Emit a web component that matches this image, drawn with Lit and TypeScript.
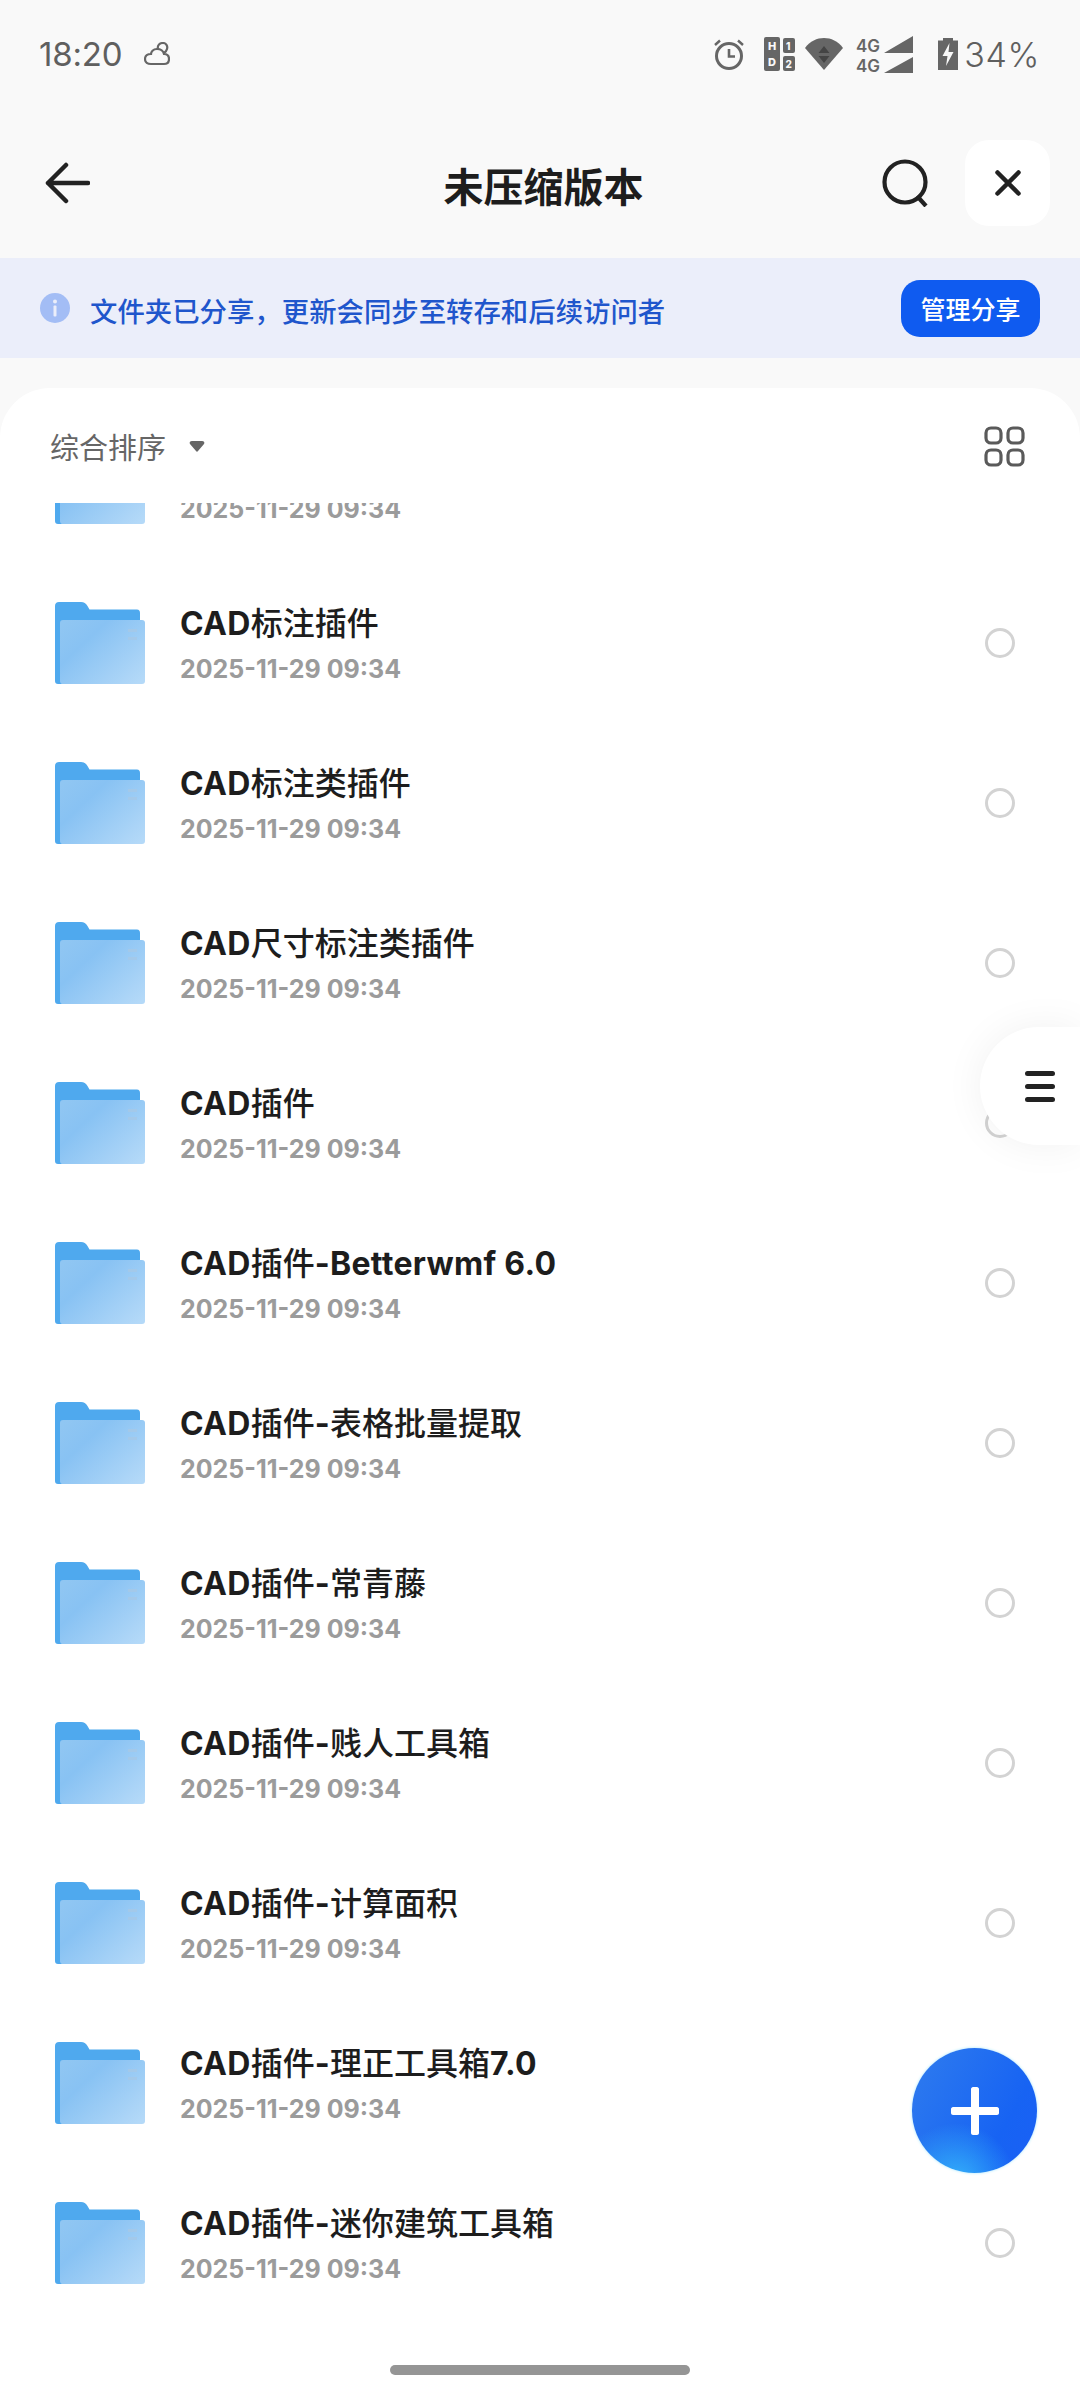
import { LitElement, html, css, svg } from "lit";
import { customElement } from "lit/decorators.js";

const NAMES = [
  "CAD标注插件",
  "CAD标注类插件",
  "CAD尺寸标注类插件",
  "CAD插件",
  "CAD插件-Betterwmf 6.0",
  "CAD插件-表格批量提取",
  "CAD插件-常青藤",
  "CAD插件-贱人工具箱",
  "CAD插件-计算面积",
  "CAD插件-理正工具箱7.0",
  "CAD插件-迷你建筑工具箱",
];

const folder = svg`<svg class="folder" width="90" height="82" viewBox="0 0 90 82">
  <defs>
    <linearGradient id="fg" x1="0" y1="0.1" x2="1" y2="0.9">
      <stop offset="0" stop-color="#90c6f2"/><stop offset="0.3" stop-color="#88c2f3"/><stop offset="1" stop-color="#b4d9f8"/>
    </linearGradient>
  </defs>
  <path d="M4 0H26C29 0 31 1.500 32.500 4L34.500 7.500H82C84 7.500 85 9 85 11V60L6 82H3C1 82 0 81 0 79V4C0 1.500 1.500 0 4 0Z" fill="#4fa9ee"/>
  <path d="M8 18H87C89 18 90 19 90 21V79C90 81 89 82 87 82H8C6 82 5 81 5 79V21C5 19 6 18 8 18Z" fill="url(#fg)"/>
  <rect x="73" y="27" width="9" height="3" fill="#a3c9ea"/><rect x="73" y="35" width="9" height="3" fill="#a3c9ea"/>
</svg>`;

/* Latin runs are heavier than the CJK glyphs in the reference's row titles. */
const nameParts = (n: string) =>
  n.split(/([A-Za-z0-9 .\-]+)/).map((p) => (/^[A-Za-z0-9 .\-]+$/.test(p) ? html`<b>${p}</b>` : p));

@customElement("app-root")
export class AppRoot extends LitElement {
  static styles = css`
    :host {
      display: flex;
      flex-direction: column;
      width: 1080px;
      height: 2400px;
      overflow: hidden;
      position: relative;
      background: #f9f9f9;
      font-family: Inter, "Noto Sans CJK SC", sans-serif;
      color: #1d1d1d;
    }
    * { box-sizing: border-box; }
    .status {
      height: 108px;
      flex: none;
      display: flex;
      align-items: center;
      padding: 0 40px 0 39px;
      color: #666;
    }
    .time { font-size: 33px; font-weight: 400; letter-spacing: -0.2px; color: #5f5f5f; }
    .cloud { margin-left: 22px; }
    .sr { margin-left: auto; display: flex; align-items: center; }
    .pct { font-size: 34px; font-weight: 300; margin-left: 6px; letter-spacing: 0.6px; color: #5f5f5f; }
    .sim { margin-left: 19px; }
    .wifi { margin-left: 10px; }
    .net { margin-left: 13px; }
    .bat { margin-left: 25px; }
    .header {
      height: 150px;
      flex: none;
      position: relative;
      display: flex;
      align-items: center;
      padding: 0 30px 0 45px;
    }
    .title {
      position: absolute;
      left: 7px;
      right: 0;
      top: 56px;
      text-align: center;
      font-size: 40px;
      font-weight: 700;
      line-height: 48px;
    }
    .search { margin-left: auto; }
    .close {
      margin-left: 36px;
      width: 85px;
      height: 86px;
      background: #fff;
      border-radius: 24px;
      display: flex;
      align-items: center;
      justify-content: center;
    }
    .banner {
      height: 100px;
      flex: none;
      background: #ebeefa;
      display: flex;
      align-items: center;
      padding: 0 40px 0 40px;
      color: #1f56cc;
      font-size: 27.4px;
      font-weight: 500;
    }
    .banner .txt { margin-left: 20px; position: relative; top: 2px; }
    .btn {
      margin-left: auto;
      width: 139px;
      height: 57px;
      border-radius: 19px;
      background: #0f5bf0;
      color: #fff;
      font-size: 25px;
      display: flex;
      align-items: center;
      justify-content: center;
    }
    .sheet {
      margin-top: 30px;
      flex: 1;
      min-height: 0;
      background: #fff;
      border-radius: 50px 50px 0 0;
      display: flex;
      flex-direction: column;
    }
    .bar {
      height: 115px;
      flex: none;
      display: flex;
      align-items: center;
      padding: 2px 55px 0 50px;
      color: #666;
      font-size: 29px;
    }
    .bar span { margin-bottom: 2px; }
    .caret { margin-left: 23px; }
    .grid { margin-left: auto; }
    .list { flex: 1; min-height: 0; overflow: hidden; }
    .rows { margin-top: -100px; }
    .row {
      height: 160px;
      display: flex;
      align-items: center;
      padding: 0 65px 0 55px;
    }
    .folder { flex: none; }
    .info { margin-left: 35px; flex: 1; padding-top: 3px; }
    .name { font-size: 32px; font-weight: 500; line-height: 42px; height: 42px; }
    .name b { font-weight: 700; letter-spacing: 0.3px; }
    .date {
      margin-top: 7px;
      font-size: 25px;
      line-height: 34px;
      font-weight: 700;
      color: #9b9b9b;
    }
    .radio {
      width: 30px;
      height: 30px;
      border: 3px solid #d3d3d3;
      border-radius: 50%;
    }
    .pill {
      position: absolute;
      right: 0;
      top: 1027px;
      width: 100px;
      height: 118px;
      border-radius: 59px 0 0 59px;
      background: #fff;
      box-shadow: 0 0 40px rgba(0, 0, 0, 0.06);
      display: flex;
      flex-direction: column;
      gap: 8px;
      justify-content: center;
      padding-left: 45px;
    }
    .pill i { display: block; width: 30px; height: 5px; border-radius: 3px; background: #222; }
    .fab {
      position: absolute;
      left: 912px;
      top: 2048px;
      width: 125px;
      height: 125px;
      border-radius: 50%;
      background:
        radial-gradient(circle at 35% 108%, #35b4fa 0%, rgba(53, 180, 250, 0) 38%),
        linear-gradient(120deg, #2f7cee 0%, #1763f3 70%, #1a60f5 100%);
      box-shadow: 0 0 3px #9fe6ff;
      display: flex;
      align-items: center;
      justify-content: center;
    }
    .home {
      position: absolute;
      left: 390px;
      top: 2365px;
      width: 300px;
      height: 10px;
      border-radius: 5px;
      background: #959595;
    }
  `;

  render() {
    return html`
      <div class="status">
        <span class="time">18:20</span>
        <svg class="cloud" width="26" height="24" viewBox="0 0 26 24" fill="none" stroke="#666" stroke-width="2.200">
          <path d="M7 22H20C23 22 25 20 25 17C25 14 23 12 20 12C19 8 16 7 13 7C9 7 7 10 7 12C3 12 1 14 1 17C1 20 3 22 7 22Z"/>
          <path d="M14 7C13 3 16 1 19 1C22 1 24 4 23 7C22.500 9 21.500 10 20 11"/>
        </svg>
        <div class="sr">
          <svg width="32" height="32" viewBox="0 0 32 32" fill="none" stroke="#666" stroke-width="3">
            <circle cx="16" cy="18" r="12.500"/>
            <path d="M16 11V18.500H22" stroke-width="2.600"/>
            <path d="M2 7L7 2.500M30 7L25 2.500" stroke-width="2.400"/>
          </svg>
          <svg class="sim" width="31" height="34" viewBox="0 0 31 34" font-family="Inter" font-weight="800" font-size="11">
            <rect x="0" y="0" width="16" height="34" rx="2" fill="#666"/>
            <rect x="19" y="1" width="12" height="15" rx="2" fill="#666"/>
            <rect x="19" y="19" width="12" height="15" rx="2" fill="#666"/>
            <text x="4" y="13" fill="#f9f9f9">H</text><text x="4" y="29" fill="#f9f9f9">D</text>
            <text x="22" y="12.500" fill="#f9f9f9" font-size="10">1</text><text x="21.500" y="30.500" fill="#f9f9f9" font-size="10">2</text>
          </svg>
          <svg class="wifi" width="38" height="32" viewBox="0 0 38 32">
            <path d="M0 10C5 3 12 0 19 0C26 0 33 3 38 10L19 32Z" fill="#666"/>
            <path d="M19 8L24.500 15H13.500Z M13.500 18H24.500L19 25Z" fill="#444"/>
          </svg>
          <svg class="net" width="57" height="37" viewBox="0 0 57 37" font-family="Inter" font-weight="600" font-size="17" fill="#666">
            <text x="0" y="16">4G</text><text x="0" y="36">4G</text>
            <path d="M28 17L57 0V17Z M28 37L57 21V37Z"/>
          </svg>
          <svg class="bat" width="20" height="32" viewBox="0 0 20 32">
            <path d="M5 0H15V2.500H20V32H0V2.500H5Z" fill="#666"/>
            <path d="M11.500 5L4.500 18H9.500L8 28L15.500 14H10.500Z" fill="#f9f9f9"/>
          </svg>
          <span class="pct">34%</span>
        </div>
      </div>

      <div class="header">
        <svg width="45" height="42" viewBox="0 0 45 42" fill="none" stroke="#222" stroke-width="4.500" stroke-linecap="round" stroke-linejoin="round">
          <path d="M43 21H3M21 3L3 21L21 39"/>
        </svg>
        <div class="title">未压缩版本</div>
        <svg class="search" width="47" height="48" viewBox="0 0 47 48" fill="none" stroke="#222" stroke-width="4.200">
          <circle cx="23" cy="23" r="20.500"/>
          <path d="M35 37L44 47"/>
        </svg>
        <div class="close">
          <svg width="26" height="26" viewBox="0 0 26 26" fill="none" stroke="#222" stroke-width="4.500" stroke-linecap="round">
            <path d="M2.500 2.500L23.500 23.500M23.500 2.500L2.500 23.500"/>
          </svg>
        </div>
      </div>

      <div class="banner">
        <svg width="30" height="30" viewBox="0 0 30 30">
          <circle cx="15" cy="15" r="15" fill="#a3bdf5"/>
          <circle cx="15" cy="8.500" r="2" fill="#ebeefa"/>
          <rect x="13.500" y="12.500" width="3" height="11" rx="1" fill="#ebeefa"/>
        </svg>
        <span class="txt">文件夹已分享，更新会同步至转存和后续访问者</span>
        <div class="btn">管理分享</div>
      </div>

      <div class="sheet">
        <div class="bar">
          <span>综合排序</span>
          <svg class="caret" width="16" height="11" viewBox="0 0 16 11"><path d="M1 3C0 1.500 1 0 3 0H13C15 0 16 1.500 15 3L9 10C8.500 11 7.500 11 7 10Z" fill="#666"/></svg>
          <svg class="grid" width="41" height="41" viewBox="0 0 41 41" fill="none" stroke="#5a5a5a" stroke-width="3.200">
            <rect x="2" y="2" width="15" height="15" rx="5"/><rect x="24" y="2" width="15" height="15" rx="5"/>
            <rect x="2" y="24" width="15" height="15" rx="5"/><rect x="24" y="24" width="15" height="15" rx="5"/>
          </svg>
        </div>
        <div class="list">
          <div class="rows">
            ${["", ...NAMES].map(
              (n) => html`<div class="row">
                ${folder}
                <div class="info">
                  <div class="name">${nameParts(n)}</div>
                  <div class="date">2025-11-29 09:34</div>
                </div>
                <div class="radio"></div>
              </div>`
            )}
          </div>
        </div>
      </div>

      <div class="pill"><i></i><i></i><i></i></div>
      <div class="fab">
        <svg width="48" height="48" viewBox="0 0 48 48"><path d="M20 2C20 1 21 0 22 0H26C27 0 28 1 28 2V20H46C47 20 48 21 48 22V26C48 27 47 28 46 28H28V46C28 47 27 48 26 48H22C21 48 20 47 20 46V28H2C1 28 0 27 0 26V22C0 21 1 20 2 20H20Z" fill="#fff"/></svg>
      </div>
      <div class="home"></div>
    `;
  }
}
